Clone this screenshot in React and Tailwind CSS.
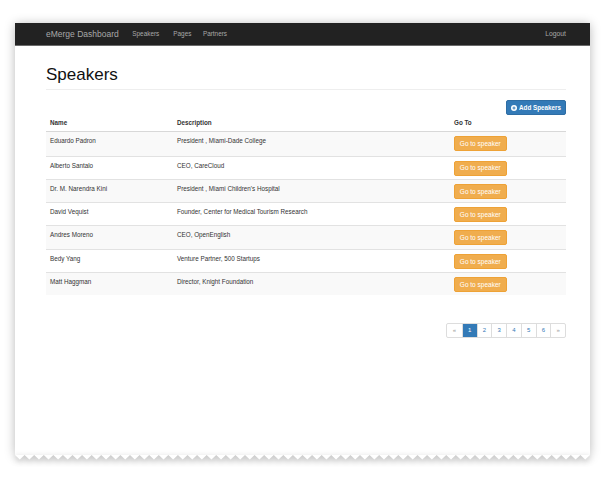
import React from 'react';

const speakers = [
  { name: 'Eduardo Padron', desc: 'President , Miami-Dade College' },
  { name: 'Alberto Santalo', desc: 'CEO, CareCloud' },
  { name: 'Dr. M. Narendra Kini', desc: "President , Miami Children's Hospital" },
  { name: 'David Vequist', desc: 'Founder, Center for Medical Tourism Research' },
  { name: 'Andres Moreno', desc: 'CEO, OpenEnglish' },
  { name: 'Bedy Yang', desc: 'Venture Partner, 500 Startups' },
  { name: 'Matt Haggman', desc: 'Director, Knight Foundation' },
];

const pages = ['«', '1', '2', '3', '4', '5', '6', '»'];

// zigzag bottom edge of the paper card
function Zigzag() {
  const teeth = 60;
  const w = 575 / teeth;
  let d = 'M0 0';
  for (let i = 0; i < teeth; i++) {
    d += ` L${(i * w + w / 2).toFixed(2)} 4.5 L${((i + 1) * w).toFixed(2)} 0`;
  }
  d += ' Z';
  return (
    <svg width="575" height="6" viewBox="0 0 575 6" className="block [filter:drop-shadow(0_2px_3px_rgba(0,0,0,0.3))]">
      <path d={d} fill="#fff" />
    </svg>
  );
}

export default function App() {
  return (
    <div className="min-h-[480px] bg-white pt-[23px] px-[15px] font-['Liberation_Sans',Arial,sans-serif] text-[#333]">
      <div className="w-[575px]">
        <div className="h-[432px] bg-white shadow-[0_1px_10px_rgba(0,0,0,0.28)] flex flex-col">
          {/* Navbar */}
          <div className="h-[23px] bg-[#222] border-b border-[#6a6a6a] flex items-center pl-[31px] pr-[24px]">
            <span className="text-[8.5px] text-[#a8a8a8]">eMerge Dashboard</span>
            <span className="ml-[13.5px] text-[6.4px] text-[#a8a8a8]">Speakers</span>
            <span className="ml-[14px] text-[6.4px] text-[#a8a8a8]">Pages</span>
            <span className="ml-[11.5px] text-[6.4px] text-[#a8a8a8]">Partners</span>
            <span className="ml-auto text-[6.8px] text-[#a8a8a8]">Logout</span>
          </div>

          <div className="pl-[31px] pr-[24px]">
            <h1 className="mt-[18.6px] text-[17px] leading-[19px] text-[#111]">Speakers</h1>
            <div className="mt-[5.7px] h-px bg-[#eee]" />

            <div className="mt-[10px] flex justify-end">
              <button className="h-[15px] w-[60px] bg-[#337ab7] border border-[#2e6da4] rounded-[2px] flex items-center justify-center gap-[2px] text-white text-[6.3px] font-bold">
                <svg width="6" height="6" viewBox="0 0 12 12">
                  <circle cx="6" cy="6" r="6" fill="#fff" />
                  <path d="M6 3v6M3 6h6" stroke="#337ab7" strokeWidth="2" />
                </svg>
                <span>Add Speakers</span>
              </button>
            </div>

            {/* Table */}
            <div className="grid grid-cols-[127px_277px_116px] h-[17px] border-b border-[#d8d8d8] items-end text-[6.3px] font-bold leading-[8px] pb-[4px]">
              <div className="px-[4px]">Name</div>
              <div className="px-[4px]">Description</div>
              <div className="px-[4px]">Go To</div>
            </div>
            {speakers.map((s, i) => (
              <div
                key={s.name}
                className={`grid grid-cols-[127px_277px_116px] h-[23.3px] items-start text-[6.3px] leading-[9.4px] ${i > 0 ? 'border-t border-[#e2e2e2]' : ''} ${i % 2 === 0 ? 'bg-[#f9f9f9]' : 'bg-white'}`}
              >
                <div className="px-[4px] pt-[4px]">{s.name}</div>
                <div className="px-[4px] pt-[4px]">{s.desc}</div>
                <div className="px-[4px] pt-[4px]">
                  <button className="h-[15px] w-[52.5px] bg-[#f0ad4e] border border-[#eea236] rounded-[2px] text-white text-[6.5px] flex items-center justify-center">
                    Go to speaker
                  </button>
                </div>
              </div>
            ))}

            {/* Pagination */}
            <div className="mt-[27.7px] flex justify-end">
              <div className="flex h-[14.7px] rounded-[2px] border border-[#ddd] overflow-hidden">
                {pages.map((p, i) => (
                  <div
                    key={i}
                    className={`w-[14.75px] flex items-center justify-center text-[6px] ${i > 0 ? 'border-l border-[#ddd]' : ''} ${p === '1' ? 'bg-[#337ab7] text-white border-[#337ab7]' : 'text-[#337ab7]'} ${p === '«' || p === '»' ? 'text-[#999]' : ''}`}
                  >
                    {p}
                  </div>
                ))}
              </div>
            </div>
          </div>
        </div>
        <Zigzag />
      </div>
    </div>
  );
}
